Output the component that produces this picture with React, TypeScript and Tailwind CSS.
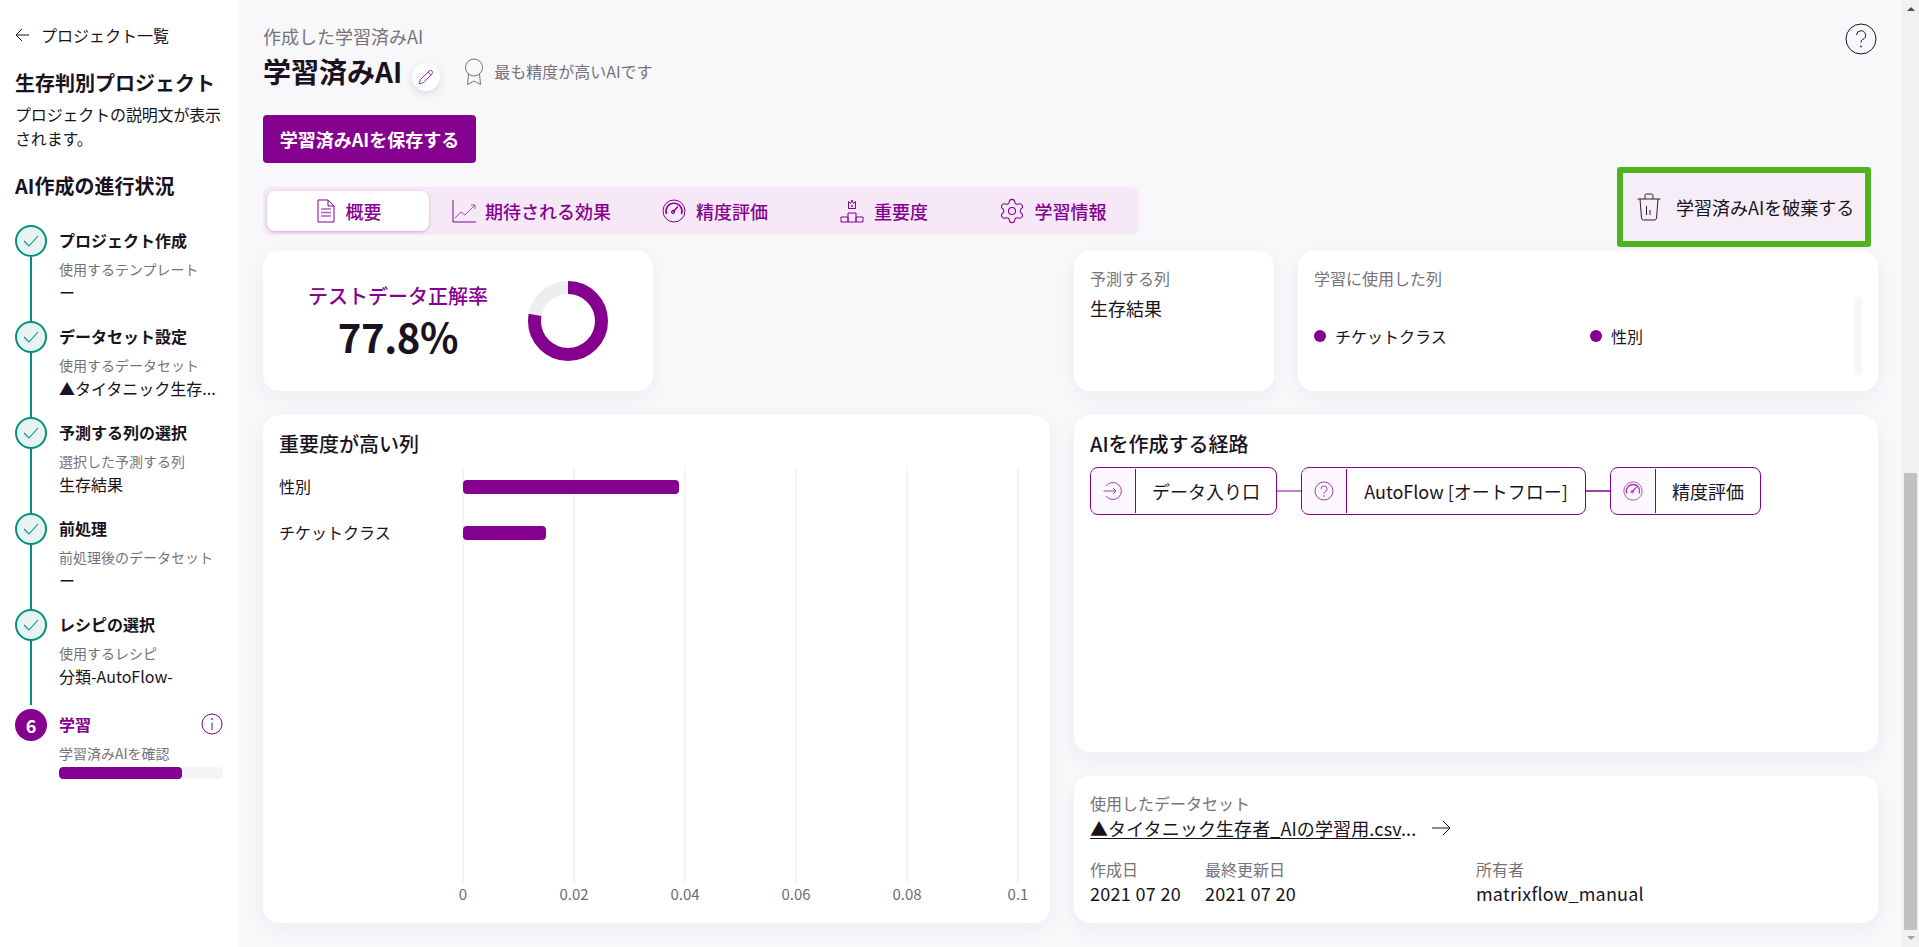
import React from "react";
import { Settings } from "lucide-react";

const P = "#860090";

function Check() {
  return (
    <div className="w-8 h-8 rounded-full border-2 border-[#00917f] bg-[#e6f4f2] flex items-center justify-center shrink-0 z-10">
      <svg width="18" height="14" viewBox="0 0 18 14" fill="none" stroke="#00917f" strokeWidth="1.1">
        <path d="M2 7 L7 12 L16 2" />
      </svg>
    </div>
  );
}

function Step({ title, sub, value, last }: { title: string; sub: string; value: string; last?: boolean }) {
  return (
    <div className="flex h-24">
      <div className="w-[32px] flex flex-col items-center shrink-0">
        <Check />
        <div className={"w-[2px] bg-[#00917f] " + (last ? "h-[64px]" : "flex-1")} />
      </div>
      <div className="ml-3 flex flex-col -mt-px">
        <div className="text-[16px] font-bold leading-8 text-[#1a1220]">{title}</div>
        <div className="text-[14px] leading-5 mt-[3px] text-[#777279]">{sub}</div>
        <div className="text-[16px] leading-6 mt-[1px] text-[#1a1220] whitespace-nowrap">{value}</div>
      </div>
    </div>
  );
}

function Card({ className, children }: { className?: string; children?: React.ReactNode }) {
  return <div className={"bg-white rounded-2xl shadow-[0_6px_20px_rgba(40,40,70,0.05)] " + (className ?? "")}>{children}</div>;
}

const stroke = { fill: "none", stroke: P, strokeWidth: 1 } as const;

function DocIcon() {
  return (
    <svg width="18" height="24" viewBox="0 0 18 24" {...stroke}>
      <path d="M1 1 H11 L17 7 V23 H1 Z" />
      <path d="M11 1 V7 H17" />
      <path d="M4 10 H14 M4 13.5 H14 M4 17 H14" strokeWidth="1.4" stroke="#b060bc" />
    </svg>
  );
}
function ChartIcon() {
  return (
    <svg width="24" height="24" viewBox="0 0 24 24" {...stroke}>
      <path d="M1 1 V23 H24" />
      <path d="M3 19 L9 13 L13 16 L23 6 M19 6 H23 V10" stroke="#a84ab4" />
    </svg>
  );
}
function GaugeIcon({ s = 24, c = P }: { s?: number; c?: string }) {
  return (
    <svg width={s} height={s} viewBox="0 0 24 24" fill="none" stroke={c} strokeWidth="1">
      <circle cx="12" cy="12" r="11" />
      <path d="M4.5 15 A8 8 0 1 1 19.5 15" strokeWidth="1.6" />
      <path d="M10.5 13.5 L16 7.5" strokeWidth="1.4" />
      <circle cx="11" cy="13" r="1.6" />
    </svg>
  );
}
function PodiumIcon() {
  return (
    <svg width="24" height="24" viewBox="0 0 24 24" {...stroke}>
      <path d="M8.5 9.5 V2.5 L10.5 4.5 L12 1 L13.5 4.5 L15.5 2.5 V9.5 Z" />
      <path d="M8.5 9.5 H15.5" />
      <circle cx="12" cy="7" r="0.6" />
      <path d="M8 14 H16 V23 H8 Z M1 18 H8 V23 H1 Z M16 18 H23 V23 H16 Z" />
    </svg>
  );
}

const tabs = [
  { label: "概要", icon: <DocIcon />, cls: "w-[162px] bg-white rounded-lg shadow-[0_1px_3px_rgba(134,0,144,0.3)] pl-[2px]", gap: "gap-[11px]" },
  { label: "期待される効果", icon: <ChartIcon />, cls: "w-[191px]", gap: "gap-[9px]" },
  { label: "精度評価", icon: <GaugeIcon />, cls: "w-[162px]", gap: "gap-[10px]" },
  { label: "重要度", icon: <PodiumIcon />, cls: "w-[162px]", gap: "gap-[10px]" },
  { label: "学習情報", icon: <Settings size={28} strokeWidth={0.9} color={P} className="-ml-[2px] -mr-[1px]" />, cls: "w-[162px]", gap: "gap-[10px]" },
];

function Dot({ label, className }: { label: string; className?: string }) {
  return (
    <div className={"flex items-center gap-[9px] " + (className ?? "")}>
      <span className="w-3 h-3 rounded-full bg-[#860090]" />
      <span className="text-[16px] text-[#1a1220]">{label}</span>
    </div>
  );
}

function FlowNode({ icon, label, className }: { icon: React.ReactNode; label: string; className: string }) {
  return (
    <div className={"h-12 border border-[#860090] rounded-[8px] flex overflow-hidden bg-white shrink-0 " + className}>
      <div className="w-[45px] shrink-0 bg-[#fdf7ff] border-r border-[#860090] flex items-center justify-center my-[1px]">{icon}</div>
      <div className="flex-1 flex items-center justify-center text-[18px] text-[#1a1220] whitespace-nowrap">{label}</div>
    </div>
  );
}

function Chart() {
  const x0 = 200;
  const step = 111;
  const ticks = ["0", "0.02", "0.04", "0.06", "0.08", "0.1"];
  return (
    <svg width="787" height="447" viewBox="0 0 787 447" className="block">
      {ticks.map((t, i) => (
        <g key={t}>
          <line x1={x0 + i * step} x2={x0 + i * step} y1="0" y2="416" stroke="#f2f2f4" strokeWidth="1.5" />
          <text x={x0 + i * step} y="433" textAnchor="middle" fontSize="15" fill="#6f6b72">{t}</text>
        </g>
      ))}
      <text x="16" y="26" fontSize="16" fill="#1a1220">性別</text>
      <text x="16" y="72" fontSize="16" fill="#1a1220">チケットクラス</text>
      <rect x={x0} y="13" width="216" height="14" rx="4" fill={P} />
      <rect x={x0} y="59" width="83" height="14" rx="4" fill={P} />
    </svg>
  );
}

export default function App() {
  return (
    <div className="w-[1919px] h-[947px] flex overflow-hidden bg-[#f8f8fb] text-[#1a1220]" style={{ fontFamily: '"Noto Sans CJK JP", "Noto Sans", sans-serif' }}>
      {/* Sidebar */}
      <aside className="w-[239px] shrink-0 bg-white pl-[15px] pr-[15px] flex flex-col">
        <div className="flex items-center gap-[12px] mt-[23px] h-6">
          <svg width="14" height="14" viewBox="0 0 14 14" fill="none" stroke="#1a1220" strokeWidth="1">
            <path d="M14 7 H1 M7 1 L1 7 L7 13" />
          </svg>
          <span className="text-[16px] leading-6">プロジェクト一覧</span>
        </div>
        <h1 className="text-[20px] font-bold leading-8 mt-[20px]">生存判別プロジェクト</h1>
        <p className="text-[16px] leading-6 mt-[3px] w-[210px] tracking-[-0.01em]">プロジェクトの説明文が表示されます。</p>
        <h2 className="text-[20px] font-bold leading-8 mt-[20px] whitespace-nowrap">AI作成の進行状況</h2>
        <div className="mt-[23px] flex flex-col">
          <Step title="プロジェクト作成" sub="使用するテンプレート" value="ー" />
          <Step title="データセット設定" sub="使用するデータセット" value="▲タイタニック生存..." />
          <Step title="予測する列の選択" sub="選択した予測する列" value="生存結果" />
          <Step title="前処理" sub="前処理後のデータセット" value="ー" />
          <Step title="レシピの選択" sub="使用するレシピ" value="分類-AutoFlow-" last />
          <div className="flex">
            <div className="w-8 h-8 rounded-full bg-[#860090] text-white font-bold flex items-center justify-center text-[18px] shrink-0 mt-[4px]">6</div>
            <div className="ml-3 flex-1 flex flex-col mt-[3px]">
              <div className="flex items-center justify-between h-8">
                <span className="text-[16px] font-bold text-[#860090]">学習</span>
                <svg width="22" height="22" viewBox="0 0 22 22" fill="none" stroke={P} strokeWidth="1" className="mr-[1px]">
                  <circle cx="11" cy="11" r="10" />
                  <path d="M11 9.5 V17" />
                  <circle cx="11" cy="6" r="0.5" />
                </svg>
              </div>
              <div className="text-[14px] leading-5 mt-[3px] text-[#777279]">学習済みAIを確認</div>
              <div className="h-3 mt-[4px] w-[164px] rounded-sm bg-[#f5f5f8] overflow-hidden">
                <div className="h-full w-[75%] bg-[#860090] rounded-sm" />
              </div>
            </div>
          </div>
        </div>
      </aside>

      {/* Main */}
      <main className="flex-1 min-w-0 px-6 flex flex-col">
        <div className="flex justify-between items-start">
          <div className="flex flex-col mt-[24px]">
            <div className="text-[18px] leading-6 text-[#777279]">作成した学習済みAI</div>
            <div className="flex items-center mt-[1px] h-[44px]">
              <span className="text-[28px] font-bold leading-10">学習済みAI</span>
              <span className="ml-[10px] mt-[12px] w-7 h-7 rounded-full bg-white shadow-[0_3px_10px_rgba(0,0,0,0.12)] flex items-center justify-center">
                <svg width="16" height="16" viewBox="0 0 16 16" fill="none" stroke="#a63db0" strokeWidth="1">
                  <path d="M1 15 L2.5 10.5 L11 2 Q12.5 0.8 14 2 Q15.2 3.5 14 5 L5.5 13.5 Z M10 3 L13 6" />
                </svg>
              </span>
              <svg width="20" height="28" viewBox="0 0 20 28" fill="none" stroke="#77727a" strokeWidth="1" className="ml-[24px] mt-[2px]">
                <circle cx="10" cy="9.5" r="8.5" />
                <path d="M4.5 16 L3.5 26.5 L10 23 L16.5 26.5 L15.5 16" />
              </svg>
              <span className="ml-[10px] text-[16px] text-[#777279]">最も精度が高いAIです</span>
            </div>
            <button className="mt-[22px] w-[213px] h-12 rounded bg-[#860090] text-white font-bold text-[18px]">学習済みAIを保存する</button>
          </div>
          <svg width="32" height="32" viewBox="0 0 32 32" fill="none" stroke="#1a1220" strokeWidth="1" className="mt-[23px] mr-[1px]">
            <circle cx="16" cy="16" r="15" />
            <path d="M11.5 12 A4.5 4.5 0 1 1 17.5 16.5 Q16 17.3 16 19.5" />
            <circle cx="16" cy="23.5" r="0.6" />
          </svg>
        </div>

        <div className="flex justify-between items-start mt-1">
          <div className="mt-5 w-[876px] h-12 rounded-lg bg-[#f6e8f7] flex items-center px-1 gap-[7px]">
            {tabs.map((t) => (
              <div key={t.label} className={"h-10 flex items-center justify-center text-[18px] font-medium text-[#860090] " + t.gap + " " + t.cls}>
                {t.icon}
                <span className="whitespace-nowrap">{t.label}</span>
              </div>
            ))}
          </div>
          <div className="mr-[7px] w-[254px] h-20 border-[6px] border-[#4fb31f] rounded-[3px] bg-[#f5eef9] flex items-center pl-[14px]">
            <svg width="24" height="28" viewBox="0 0 24 28" fill="none" stroke="#2a1f30" strokeWidth="1" className="shrink-0">
              <path d="M0.5 6 H23.5 M8 6 V2.5 Q8 1 9.5 1 H14.5 Q16 1 16 2.5 V6" />
              <path d="M3 6 L4.5 25 Q4.6 27 6.5 27 H17.5 Q19.4 27 19.5 25 L21 6" />
              <path d="M9.5 13 V22 M13 17 V22" />
            </svg>
            <span className="ml-[15px] text-[18px] whitespace-nowrap">学習済みAIを破棄する</span>
          </div>
        </div>

        <div className="mt-1 flex gap-6 flex-1 mb-6 min-h-0">
          {/* Left column */}
          <div className="w-[787px] flex flex-col gap-6">
            <Card className="w-[390px] h-[140px] flex items-center shrink-0">
              <div className="w-[270px] flex flex-col items-center pt-[1px]">
                <div className="text-[20px] font-medium leading-7 text-[#860090]">テストデータ正解率</div>
                <div className="text-[40px] font-bold leading-[52px] tracking-[-0.01em]">77.8%</div>
              </div>
              <svg width="80" height="80" viewBox="0 0 80 80" className="-ml-[5px]">
                <circle cx="40" cy="40" r="33.5" fill="none" stroke="#eeeeee" strokeWidth="13" />
                <circle cx="40" cy="40" r="33.5" fill="none" stroke={P} strokeWidth="13" strokeDasharray={`${2 * Math.PI * 33.5 * 0.778} 1000`} transform="rotate(-90 40 40)" />
              </svg>
            </Card>
            <Card className="flex-1 min-h-0 flex flex-col">
              <div className="px-4 pt-[14px] text-[20px] font-medium leading-[30px]">重要度が高い列</div>
              <div className="mt-[8px]">
                <Chart />
              </div>
            </Card>
          </div>

          {/* Right column */}
          <div className="flex-1 min-w-0 flex flex-col gap-6">
            <div className="flex gap-6 h-[140px] shrink-0">
              <Card className="w-[200px] px-4 pt-4">
                <div className="text-[16px] leading-[22px] text-[#777279]">予測する列</div>
                <div className="text-[18px] leading-6 mt-[7px]">生存結果</div>
              </Card>
              <Card className="flex-1 pl-4 pr-4 pt-4 flex">
                <div className="flex-1 flex flex-col">
                  <div className="text-[16px] leading-[22px] text-[#777279]">学習に使用した列</div>
                  <div className="flex mt-[31px] h-8 items-center">
                    <Dot label="チケットクラス" className="w-[276px]" />
                    <Dot label="性別" />
                  </div>
                </div>
                <div className="w-2 h-[78px] mt-[30px] rounded bg-[#f7f7fa]" />
              </Card>
            </div>
            <Card className="h-[337px] px-4 pt-[14px] shrink-0">
              <div className="text-[20px] font-medium leading-[30px]">AIを作成する経路</div>
              <div className="flex items-center mt-[8px]">
                <FlowNode
                  className="w-[187px]"
                  label="データ入り口"
                  icon={
                    <svg width="20" height="20" viewBox="0 0 20 20" fill="none" stroke="#a63db0" strokeWidth="1">
                      <path d="M3 5 A8.5 8.5 0 1 1 3 15" />
                      <path d="M0.5 10 H13 M10 7 L13 10 L10 13" />
                    </svg>
                  }
                />
                <div className="w-6 h-[2px] bg-[#c07fc8]" />
                <FlowNode
                  className="w-[285px]"
                  label="AutoFlow [オートフロー]"
                  icon={
                    <svg width="20" height="20" viewBox="0 0 20 20" fill="none" stroke="#a63db0" strokeWidth="1">
                      <circle cx="10" cy="10" r="9" />
                      <path d="M7 8 A3 3 0 1 1 11 10.8 Q10 11.3 10 12.8" />
                      <circle cx="10" cy="15" r="0.4" />
                    </svg>
                  }
                />
                <div className="w-6 h-[2px] bg-[#a040aa]" />
                <FlowNode className="w-[151px]" label="精度評価" icon={<GaugeIcon s={20} c="#a63db0" />} />
              </div>
            </Card>
            <Card className="flex-1 px-4 pt-[15px] min-h-0">
              <div className="text-[16px] leading-6 text-[#777279]">使用したデータセット</div>
              <div className="flex items-center mt-[1px] h-6">
                <span className="text-[18px] whitespace-nowrap tracking-[0.1px]"><span className="underline underline-offset-2">▲タイタニック生存者_AIの学習用.csv</span>...</span>
                <svg width="20" height="16" viewBox="0 0 20 16" fill="none" stroke="#1a1220" strokeWidth="1" className="ml-[16px]">
                  <path d="M0 8 H18 M11 1 L18 8 L11 15" />
                </svg>
              </div>
              <div className="flex mt-[17px]">
                <div className="w-[115px]">
                  <div className="text-[16px] leading-6 text-[#777279]">作成日</div>
                  <div className="text-[18px] leading-6 tracking-[0.3px]">2021 07 20</div>
                </div>
                <div className="w-[271px]">
                  <div className="text-[16px] leading-6 text-[#777279]">最終更新日</div>
                  <div className="text-[18px] leading-6 tracking-[0.3px]">2021 07 20</div>
                </div>
                <div>
                  <div className="text-[16px] leading-6 text-[#777279]">所有者</div>
                  <div className="text-[18px] leading-6 tracking-[0.2px]">matrixflow_manual</div>
                </div>
              </div>
            </Card>
          </div>
        </div>
      </main>

      {/* Scrollbar */}
      <div className="w-[17px] shrink-0 bg-[#f1f1f1] flex flex-col items-center">
        <div className="mt-[7px] w-0 h-0 border-x-[4px] border-x-transparent border-b-[4px] border-b-[#505050]" />
        <div className="mt-[462px] w-[13px] h-[457px] bg-[#c1c1c1]" />
        <div className="mt-[6px] w-0 h-0 border-x-[4px] border-x-transparent border-t-[4px] border-t-[#a3a3a3]" />
      </div>
    </div>
  );
}
